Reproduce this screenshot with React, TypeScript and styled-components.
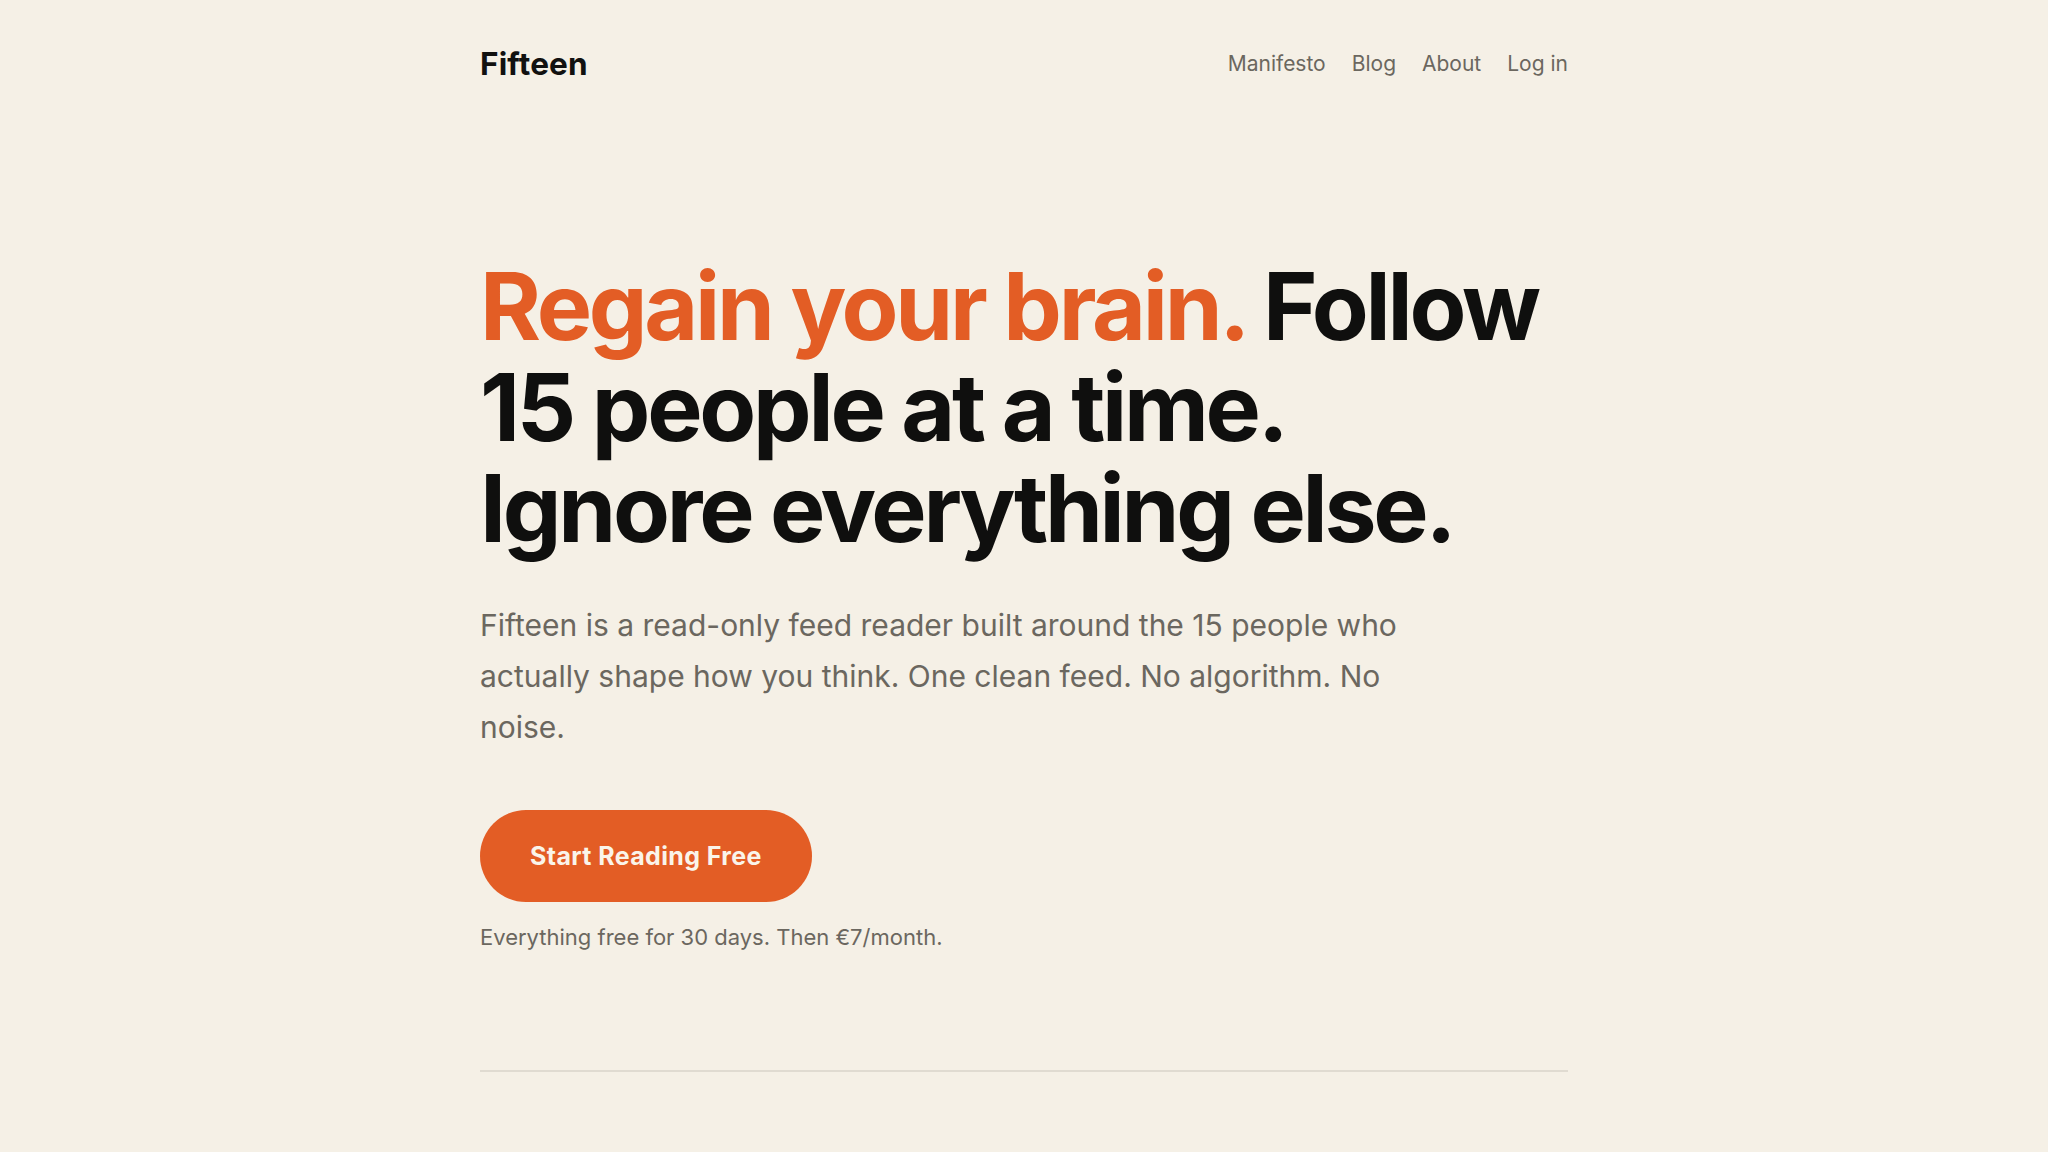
import React from 'react';
import styled, { createGlobalStyle } from 'styled-components';

const GlobalStyle = createGlobalStyle`
  html, body {
    margin: 0;
    padding: 0;
    background: #f5f0e6;
  }
  body {
    font-family: Inter, "Noto Sans", sans-serif;
    -webkit-font-smoothing: antialiased;
  }
`;

const Page = styled.div`
  min-height: 1152px;
  background: #f5f0e6;
`;

const Container = styled.div`
  max-width: 1088px;
  margin: 0 auto;
`;

const Header = styled.header`
  display: flex;
  align-items: center;
  justify-content: space-between;
  height: 126px;
`;

const Logo = styled.a`
  font-family: Inter, sans-serif;
  font-size: 31.5px;
  font-weight: 700;
  letter-spacing: 0.005em;
  color: #111110;
  text-decoration: none;
`;

const Nav = styled.nav`
  display: flex;
  align-items: center;
  gap: 26px;
`;

const NavLink = styled.a`
  font-size: 21px;
  color: #6b675f;
  text-decoration: none;
`;

const Hero = styled.section`
  padding: 130px 0 120px;
`;

const Headline = styled.h1`
  margin: 0;
  font-family: Inter, sans-serif;
  font-size: 93px;
  line-height: 101px;
  font-weight: 700;
  letter-spacing: -0.035em;
  color: #0f0f0e;
`;

const Accent = styled.span`
  color: #e35d25;
`;

const Lead = styled.p`
  margin: 41px 0 0;
  max-width: 960px;
  font-size: 30px;
  line-height: 51px;
  color: #6b675f;
`;

const Cta = styled.button`
  margin-top: 57px;
  height: 92px;
  padding: 0 50px;
  border: none;
  border-radius: 999px;
  background: #e35d25;
  color: #faf4ea;
  font-family: Inter, sans-serif;
  font-size: 25px;
  font-weight: 700;
  letter-spacing: 0.015em;
  cursor: pointer;
`;

const Note = styled.p`
  margin: 22px 0 0;
  font-size: 22px;
  color: #6b675f;
`;

const Divider = styled.hr`
  margin: 0;
  border: none;
  border-top: 2px solid #e0dbd1;
`;

export default function App() {
  return (
    <Page>
      <GlobalStyle />
      <Container>
        <Header>
          <Logo href="#">Fifteen</Logo>
          <Nav>
            <NavLink href="#">Manifesto</NavLink>
            <NavLink href="#">Blog</NavLink>
            <NavLink href="#">About</NavLink>
            <NavLink href="#">Log in</NavLink>
          </Nav>
        </Header>
        <Hero>
          <Headline>
            <Accent>Regain your brain.</Accent> Follow
            <br />
            15 people at a time.
            <br />
            Ignore everything else.
          </Headline>
          <Lead>
            Fifteen is a read-only feed reader built around the 15 people who actually shape how you think. One clean
            feed. No algorithm. No noise.
          </Lead>
          <Cta>Start Reading Free</Cta>
          <Note>Everything free for 30 days. Then €7/month.</Note>
        </Hero>
        <Divider />
      </Container>
    </Page>
  );
}
